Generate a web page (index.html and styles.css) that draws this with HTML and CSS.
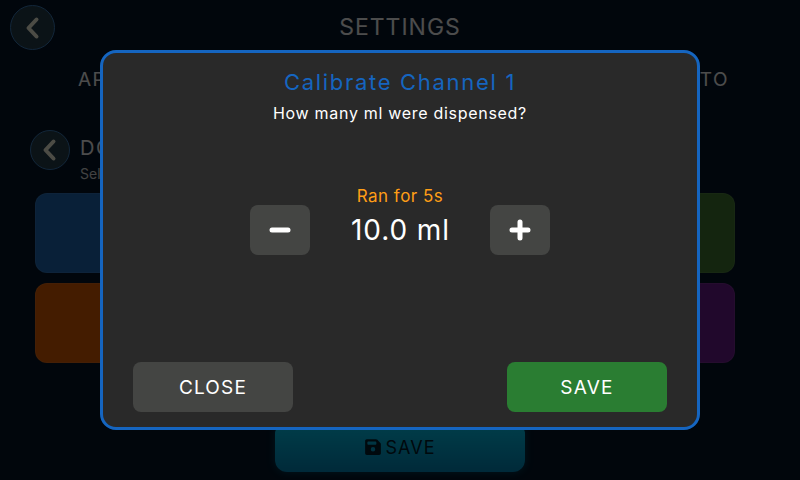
FILE: index.html
```html
<!DOCTYPE html>
<html lang="en">
<head>
<meta charset="utf-8">
<title>Settings</title>
<link rel="stylesheet" href="styles.css">
</head>
<body>
<div class="screen">
  <header class="header">
    <button class="round round-lg"><svg viewBox="0 0 24 24" width="24" height="24"><path d="M15.500 3.500 L7.500 12 L15.500 20.500" class="chev"/></svg></button>
    <h1 class="page-title">SETTINGS</h1>
  </header>
  <nav class="tabs">
    <span>APP</span><span>AUTO</span>
  </nav>
  <section class="sub">
    <button class="round round-md"><svg viewBox="0 0 24 24" width="24" height="24"><path d="M15.500 3.500 L7.500 12 L15.500 20.500" class="chev"/></svg></button>
    <div class="sub-text">
      <div class="sub-title">DOSING</div>
      <div class="sub-note">Select a channel</div>
    </div>
  </section>
  <div class="tiles">
    <div class="tile tile-blue"></div>
    <div class="tile tile-green"></div>
    <div class="tile tile-orange"></div>
    <div class="tile tile-purple"></div>
  </div>
  <div class="save-row">
    <button class="save-main">
      <svg viewBox="0 0 448 512" width="16" height="18"><path fill="currentColor" d="M48 32C21.500 32 0 53.500 0 80v352c0 26.500 21.500 48 48 48h352c26.500 0 48-21.500 48-48V173.300c0-12.700-5.100-24.900-14.100-33.900l-93.300-93.300C331.600 37.100 319.400 32 306.700 32H48zm16 96c0-17.700 14.300-32 32-32h192c17.700 0 32 14.300 32 32v32c0 17.700-14.300 32-32 32H96c-17.700 0-32-14.300-32-32v-32zm160 128a64 64 0 1 1 0 128 64 64 0 1 1 0-128z"/></svg>
      SAVE
    </button>
  </div>
</div>
<div class="overlay">
  <div class="modal">
    <h2 class="modal-title">Calibrate Channel 1</h2>
    <p class="modal-sub">How many ml were dispensed?</p>
    <div class="stepper">
      <div class="ran">Ran for 5s</div>
      <div class="step-row">
        <button class="step"><svg viewBox="0 0 22 22" width="22" height="22"><path d="M3 11H19" class="glyph"/></svg></button>
        <div class="value">10.0 ml</div>
        <button class="step"><svg viewBox="0 0 22 22" width="22" height="22"><path d="M3 11H19M11 3V19" class="glyph"/></svg></button>
      </div>
    </div>
    <div class="actions">
      <button class="act act-close">CLOSE</button>
      <button class="act act-save">SAVE</button>
    </div>
  </div>
</div>
</body>
</html>
```
FILE: styles.css
```css
* { box-sizing: border-box; }
html, body { margin: 0; height: 100%; }
body {
  width: 800px;
  height: 480px;
  overflow: hidden;
  position: relative;
  background: #041528;
  font-family: Inter, "Open Sans", sans-serif;
  color: #fff;
}
button { font-family: inherit; color: inherit; border: 0; padding: 0; }
.screen { width: 800px; height: 480px; display: flex; flex-direction: column; }
.header { display: flex; align-items: center; height: 45px; margin: 5px 10px 0; }
.page-title { flex: 1; margin: 0 45px 0 0; text-align: center; font-size: 23px; line-height: 45px; font-weight: 400; letter-spacing: 1px; }
.round { display: flex; align-items: center; justify-content: center; border-radius: 50%; background: #26404f; border: 1px solid #3c80c0; flex: none; }
.round-lg { width: 45px; height: 45px; }
.round-md { width: 40px; height: 40px; }
.chev { fill: none; stroke: #fffde8; stroke-width: 4; stroke-linecap: round; stroke-linejoin: round; }
.tabs { display: flex; justify-content: space-between; margin: 18px 71px 0 78px; font-size: 19px; line-height: 24px; letter-spacing: 1.500px; font-weight: 400; }
.sub { display: flex; gap: 10px; margin: 38px 30px 0; height: 40px; }
.sub-title { font-size: 20px; line-height: 36px; letter-spacing: 1.500px; }
.sub-note { font-size: 14px; line-height: 18px; margin-top: -1px; color: #ddd; }
.tiles { display: grid; grid-template-columns: 1fr 1fr; grid-auto-rows: 80px; gap: 10px; margin: 23px 65px 0 35px; }
.tile { border-radius: 12px; border: 1px solid rgba(255, 255, 255, .08); }
.tile-blue { background: #1f6cbc; }
.tile-green { background: #437c32; }
.tile-orange { background: #e35e00; }
.tile-purple { background: #711b93; }
.save-row { display: flex; justify-content: center; margin-top: 59px; }
.save-main { width: 250px; height: 50px; border-radius: 12px; display: flex; align-items: center; justify-content: center; gap: 5px; font-size: 18px; letter-spacing: 1px; color: #00202e; background: linear-gradient(#00d0f8, #008cc0); box-shadow: 0 0 8px rgba(0, 200, 255, .3); }
.overlay { position: absolute; inset: 0; background: rgba(0, 0, 0, .7); display: flex; align-items: center; justify-content: center; }
.modal { width: 600px; height: 380px; padding: 15px 30px; border: 3px solid #1565c0; border-radius: 16px; background: #292929; display: flex; flex-direction: column; text-align: center; }
.modal-title { margin: 0; font-size: 22px; line-height: 28px; font-weight: 400; color: #1565c0; letter-spacing: 1.700px; }
.modal-sub { margin: 7px 0 0; font-size: 16px; line-height: 20px; letter-spacing: .7px; }
.stepper { width: 300px; margin: 64px auto 0; }
.ran { font-size: 17px; line-height: 18px; color: #ff9e16; letter-spacing: .5px; }
.step-row { display: flex; align-items: center; justify-content: space-between; height: 50px; }
.step { width: 60px; height: 50px; border-radius: 8px; background: #444543; display: flex; align-items: center; justify-content: center; }
.glyph { fill: none; stroke: #fff; stroke-width: 5; stroke-linecap: round; }
.value { font-size: 28px; line-height: 50px; letter-spacing: .9px; padding-left: 1px; }
.actions { margin-top: auto; display: flex; justify-content: space-between; }
.act { width: 160px; height: 50px; border-radius: 8px; font-size: 19px; letter-spacing: 1.200px; }
.act-close { background: #444543; }
.act-save { background: #2a7d32; }
```
